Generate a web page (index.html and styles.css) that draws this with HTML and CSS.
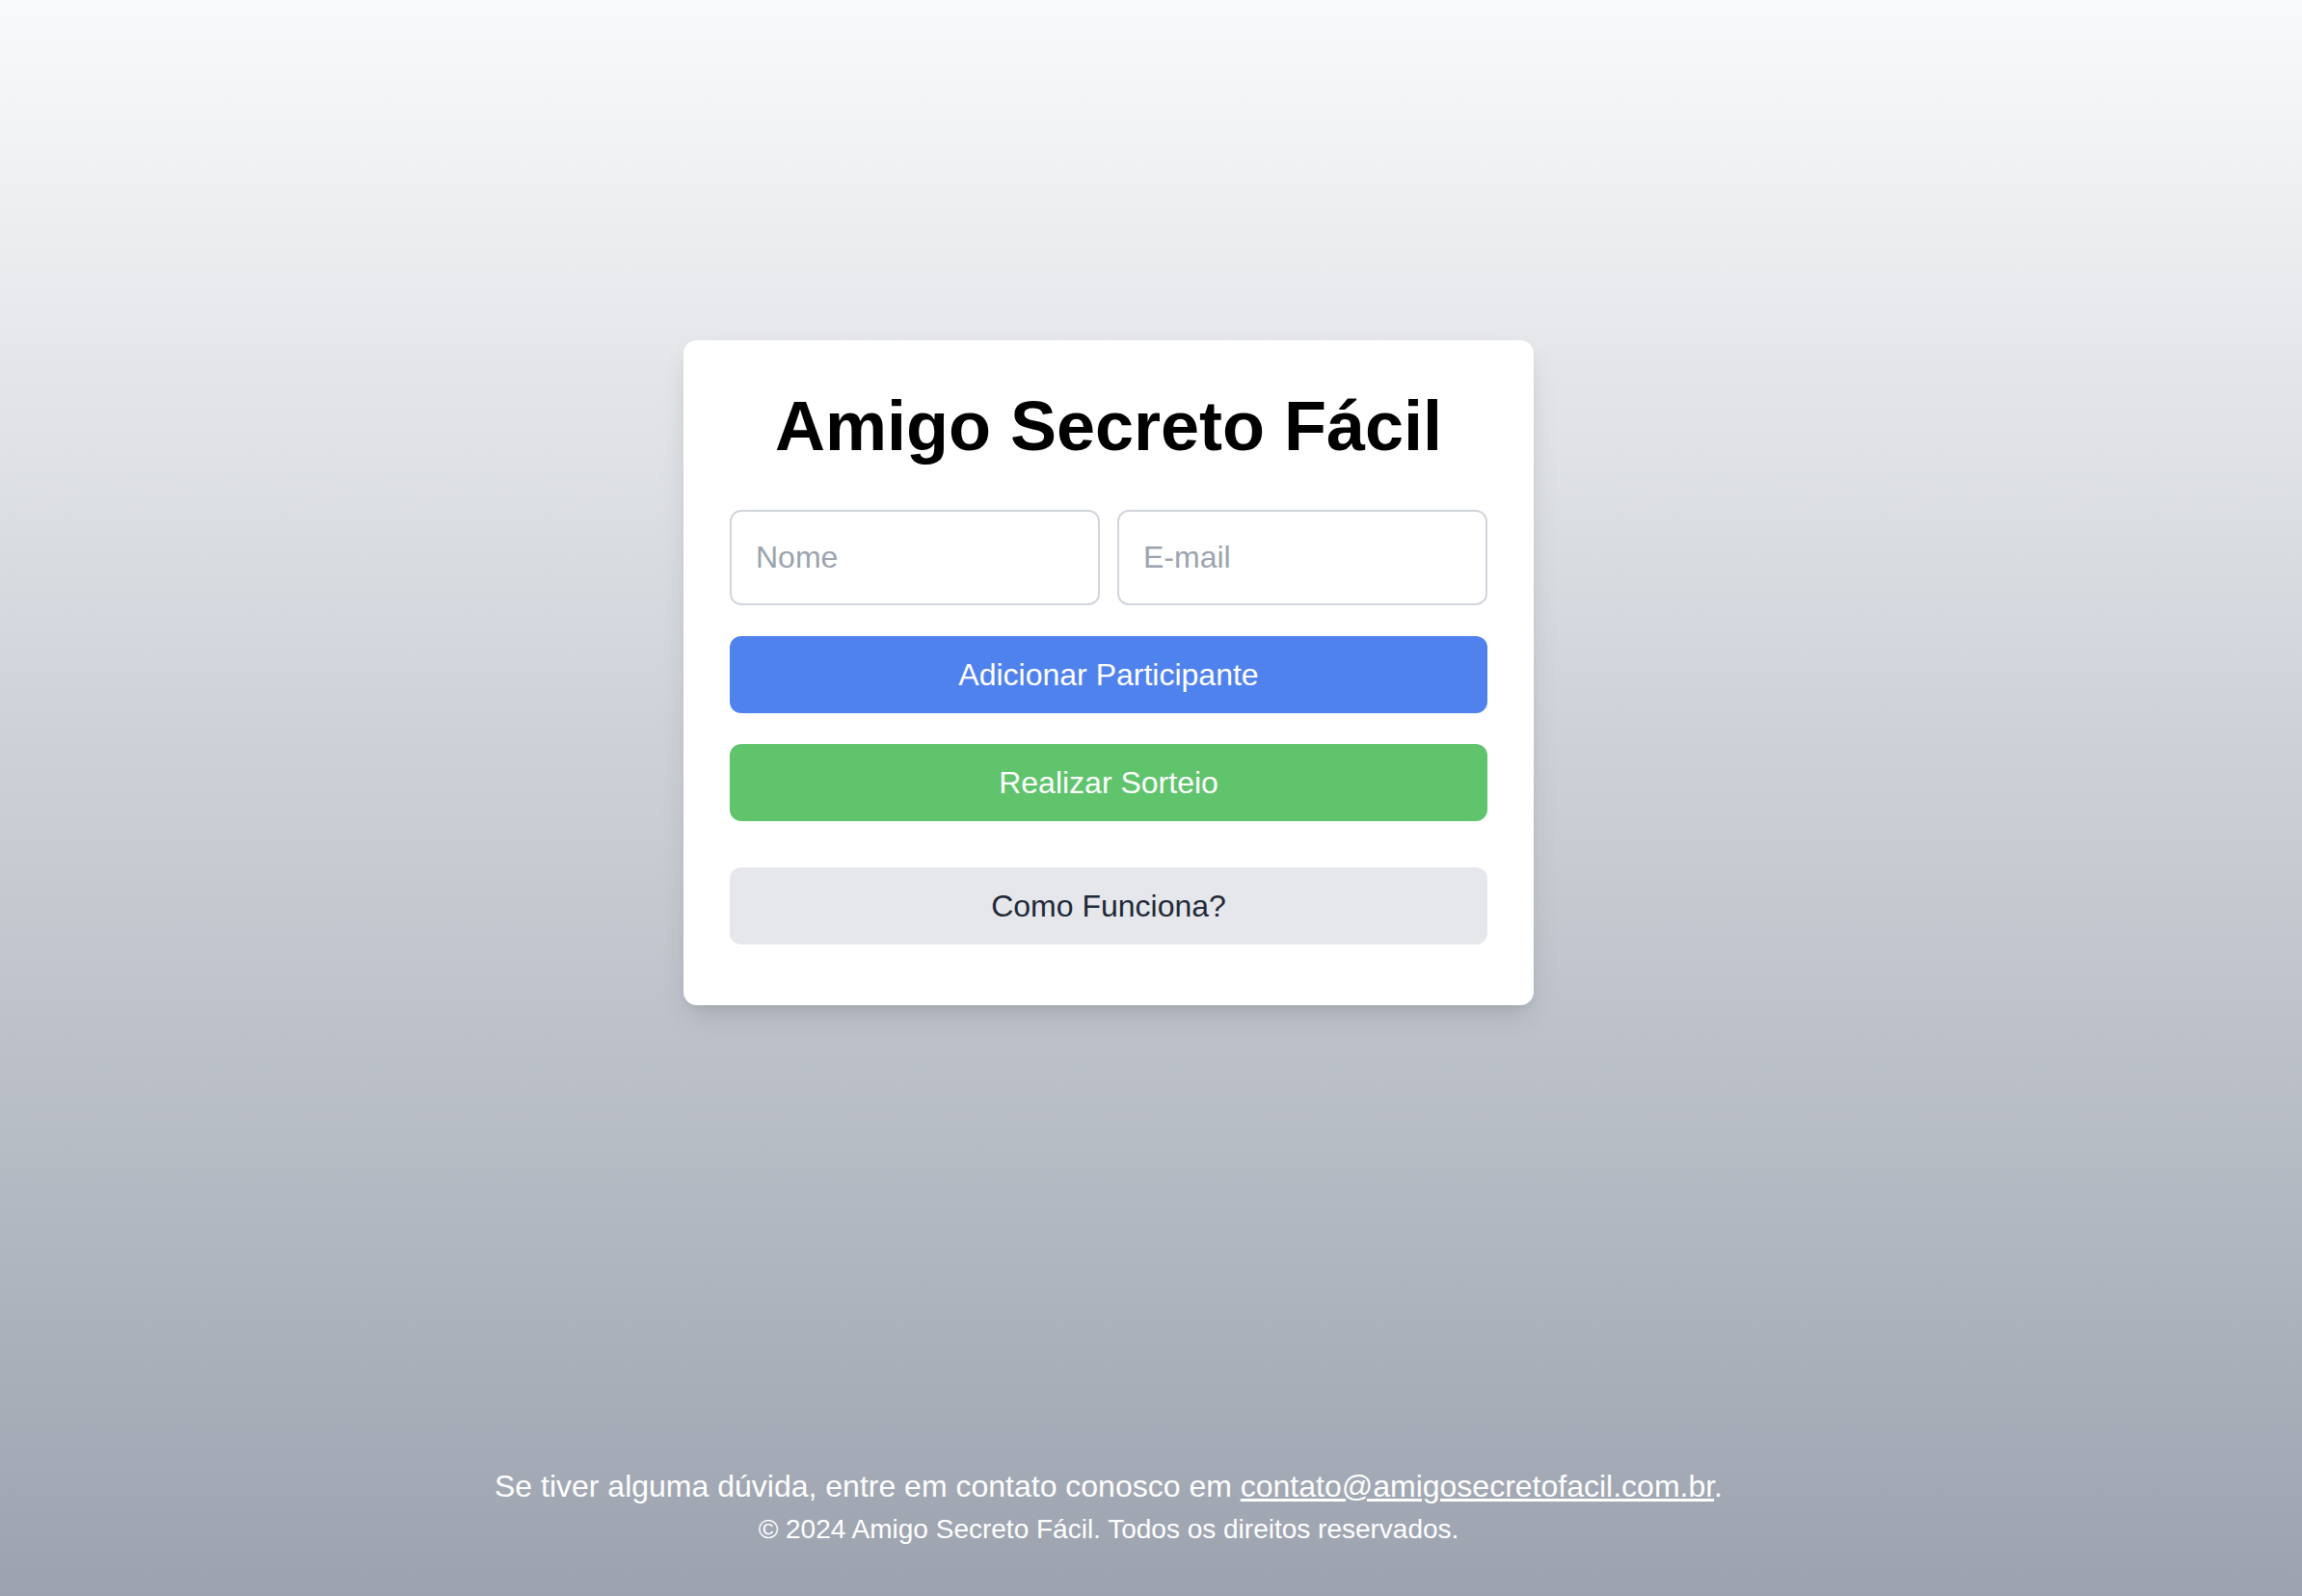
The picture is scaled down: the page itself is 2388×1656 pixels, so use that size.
FILE: index.html
```html
<!DOCTYPE html>
<html lang="pt-BR">
<head>
<meta charset="utf-8">
<title>Amigo Secreto Fácil</title>
<link rel="stylesheet" href="styles.css">
</head>
<body>
<div class="page">
  <main class="main">
    <section class="card">
      <h1 class="title">Amigo Secreto Fácil</h1>
      <div class="fields">
        <input class="field" type="text" placeholder="Nome">
        <input class="field" type="email" placeholder="E-mail">
      </div>
      <button class="btn btn-blue">Adicionar Participante</button>
      <button class="btn btn-green">Realizar Sorteio</button>
      <button class="btn btn-gray">Como Funciona?</button>
    </section>
  </main>
  <footer class="footer">
    <p class="footer-line">Se tiver alguma dúvida, entre em contato conosco em <a class="footer-link" href="#">contato@amigosecretofacil.com.br</a>.</p>
    <p class="footer-copy">© 2024 Amigo Secreto Fácil. Todos os direitos reservados.</p>
  </footer>
</div>
</body>
</html>
```
FILE: styles.css
```css
* { box-sizing: border-box; }
html, body { margin: 0; padding: 0; }
body {
  min-height: 100vh;
  background: linear-gradient(to bottom, #f9fafb 0%, #9ca3af 100%);
  font-family: "Liberation Sans", Arial, sans-serif;
}
.page {
  width: 2300px;
  min-height: 100vh;
  display: flex;
  flex-direction: column;
}
.main {
  padding-top: 353px;
  display: flex;
  justify-content: center;
}
.card {
  width: 882px;
  background: #ffffff;
  border-radius: 14px;
  padding: 48px 48px 63px;
  box-shadow: 0 15px 30px -5px rgba(0,0,0,0.12), 0 6px 12px -6px rgba(0,0,0,0.1);
  display: flex;
  flex-direction: column;
}
.title {
  margin: 0 0 46px;
  font-size: 72px;
  font-weight: 700;
  line-height: normal;
  color: #000;
  text-align: center;
}
.fields {
  display: flex;
  gap: 18px;
  margin-bottom: 32px;
}
.field {
  flex: 1;
  min-width: 0;
  height: 99px;
  border: 2px solid #d1d5db;
  border-radius: 12px;
  padding: 0 25px;
  font-family: "Liberation Sans", Arial, sans-serif;
  font-size: 32px;
  color: #111827;
  background: #fff;
  outline: none;
}
.field::placeholder { color: #9ca3af; }
.btn {
  display: block;
  width: 100%;
  height: 80px;
  border: 0;
  border-radius: 12px;
  font-family: "Liberation Sans", Arial, sans-serif;
  font-size: 32px;
  cursor: pointer;
  padding: 0;
}
.btn-blue { background: #5082ee; color: #fff; margin-bottom: 32px; }
.btn-green { background: #5fc46c; color: #fff; margin-bottom: 48px; }
.btn-gray { background: #e5e7eb; color: #1f2937; }
.footer {
  margin-top: auto;
  padding: 0 0 48px;
  text-align: center;
  color: #fff;
}
.footer-line {
  margin: 0;
  font-size: 32px;
  line-height: 48px;
}
.footer-link { color: #fff; text-decoration: underline; }
.footer-copy {
  margin: 0;
  font-size: 28px;
  line-height: 42px;
}
```
